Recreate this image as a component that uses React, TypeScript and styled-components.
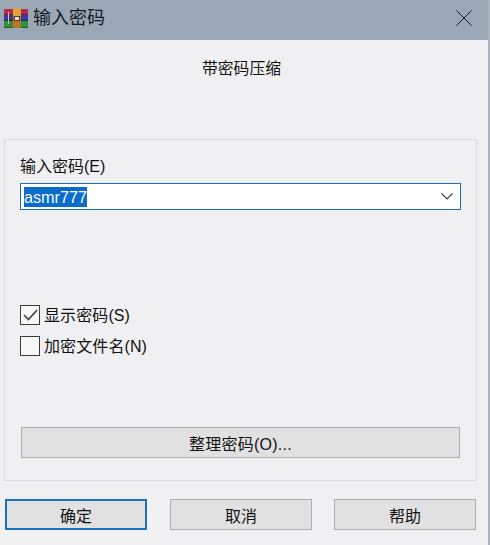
import React from "react";
import styled, { createGlobalStyle } from "styled-components";

const Global = createGlobalStyle`
  html, body { margin: 0; padding: 0; background: #f0f0f2; }
  body { font-family: "Liberation Sans", "Noto Sans CJK SC", sans-serif; color: #111; }
`;

const Frame = styled.div`
  width: 490px;
  height: 545px;
  display: flex;
  flex-direction: column;
  background: #f0f0f2;
  overflow: hidden;
  border-right: 2px solid #a9b2bb;
  box-sizing: border-box;
`;

const TitleBar = styled.header`
  height: 40px;
  flex: none;
  box-sizing: border-box;
  background: #9aa8b6;
  margin-right: -2px;
  display: flex;
  align-items: center;
  padding: 0 18px 4px 4px;
  gap: 5px;
`;

const AppTitle = styled.span`
  font-size: 18px;
  line-height: 36px;
  color: #15191d;
  flex: 1;
`;

const Subtitle = styled.div`
  height: 59px;
  flex: none;
  padding-top: 18px;
  box-sizing: border-box;
  padding-left: 202px;
  font-size: 15.8px;
  line-height: 22px;
`;

const Panel = styled.section`
  margin: 40px 0 0 4px;
  width: 473px;
  height: 342px;
  flex: none;
  box-sizing: border-box;
  border: 1px solid #dcdcde;
  padding: 15px 15px 0;
  display: flex;
  flex-direction: column;
`;

const FieldLabel = styled.label`
  font-size: 16px;
  line-height: 24px;
  height: 28px;
  display: block;
`;

const Combo = styled.div`
  width: 441px;
  height: 27px;
  box-sizing: border-box;
  border: 1px solid #1f6fb2;
  background: #fff;
  display: flex;
  align-items: center;
  padding: 0 7px 0 3px;
  justify-content: space-between;
`;

const Selected = styled.span`
  background: #0a6ccb;
  color: #f4f8fc;
  font-size: 16.2px;
  line-height: 20px;
  height: 20px;
`;

const Checks = styled.div`
  margin-top: 95px;
  display: flex;
  flex-direction: column;
  gap: 11px;
`;

const CheckRow = styled.div`
  display: flex;
  align-items: center;
  gap: 4px;
  height: 20px;
  font-size: 16px;
`;

const CheckText = styled.span`
  margin-top: -2px;
  letter-spacing: 0.1px;
`;

const Box = styled.span`
  width: 20px;
  height: 20px;
  box-sizing: border-box;
  border: 1px solid #3c3c3c;
  background: #f8f8f9;
  display: flex;
  align-items: center;
  justify-content: center;
`;

const buttonFace = `
  box-sizing: border-box;
  background: #e1e1e2;
  border: 1px solid #adadad;
  font-family: "Liberation Sans", "Noto Sans CJK SC", sans-serif;
  font-size: 16px;
  color: #111;
  padding: 0;
`;

const Organize = styled.button`
  ${buttonFace}
  margin: 71px 0 0 1px;
  width: 439px;
  height: 31px;
  flex: none;
  letter-spacing: 0.25px;
`;

const Action = styled.button<{ $primary?: boolean }>`
  ${buttonFace}
  width: 142px;
  height: 31px;
  flex: none;
  ${(p) => (p.$primary ? "border: 2px solid #1b72b8;" : "")}
`;

const Footer = styled.footer`
  margin: 18px 0 0 5px;
  display: flex;
  gap: 23px;
  & > *:last-child { margin-left: -1px; }
`;

const WinRarIcon = () => (
  <svg width="24" height="20" viewBox="0 0 24 20">
    <rect x="0" y="1" width="24" height="6" fill="#b32a4a" />
    <rect x="0" y="7" width="24" height="6" fill="#3a3a9e" />
    <rect x="0" y="13" width="24" height="7" fill="#2f8f3c" />
    <rect x="0" y="6" width="24" height="1" fill="#6c2440" />
    <rect x="0" y="12" width="24" height="1" fill="#24245c" />
    <rect x="0" y="19" width="24" height="1" fill="#1d5c28" />
    <rect x="9" y="0" width="8" height="8" fill="#e0a33c" />
    <rect x="9" y="8" width="8" height="12" fill="#b9742a" />
    <rect x="10.5" y="8.5" width="5" height="4" fill="#efe6d2" stroke="#5a3a1a" strokeWidth="1" />
    <rect x="4" y="4" width="1" height="12" fill="#e4c27a" />
  </svg>
);

const CloseIcon = () => (
  <svg width="16" height="16" viewBox="0 0 16 16" fill="none" stroke="#15191d" strokeWidth="1">
    <path d="M0.5 0.5L15.5 15.5M15.5 0.5L0.5 15.5" />
  </svg>
);

const Chevron = () => (
  <svg width="12" height="7" viewBox="0 0 12 7" fill="none" stroke="#444" strokeWidth="1.2">
    <path d="M0.5 0.5L6 6L11.5 0.5" />
  </svg>
);

const Tick = () => (
  <svg width="15" height="12" viewBox="0 0 15 12" fill="none" stroke="#444" strokeWidth="1.7">
    <path d="M1 6L5.5 10.5L14 1" />
  </svg>
);

export default function App() {
  return (
    <>
      <Global />
      <Frame>
        <TitleBar>
          <WinRarIcon />
          <AppTitle>输入密码</AppTitle>
          <CloseIcon />
        </TitleBar>
        <Subtitle>带密码压缩</Subtitle>
        <Panel>
          <FieldLabel>输入密码(E)</FieldLabel>
          <Combo>
            <Selected>asmr777</Selected>
            <Chevron />
          </Combo>
          <Checks>
            <CheckRow>
              <Box><Tick /></Box>
              <CheckText>显示密码(S)</CheckText>
            </CheckRow>
            <CheckRow>
              <Box />
              <CheckText>加密文件名(N)</CheckText>
            </CheckRow>
          </Checks>
          <Organize>整理密码(O)...</Organize>
        </Panel>
        <Footer>
          <Action $primary>确定</Action>
          <Action>取消</Action>
          <Action>帮助</Action>
        </Footer>
      </Frame>
    </>
  );
}
